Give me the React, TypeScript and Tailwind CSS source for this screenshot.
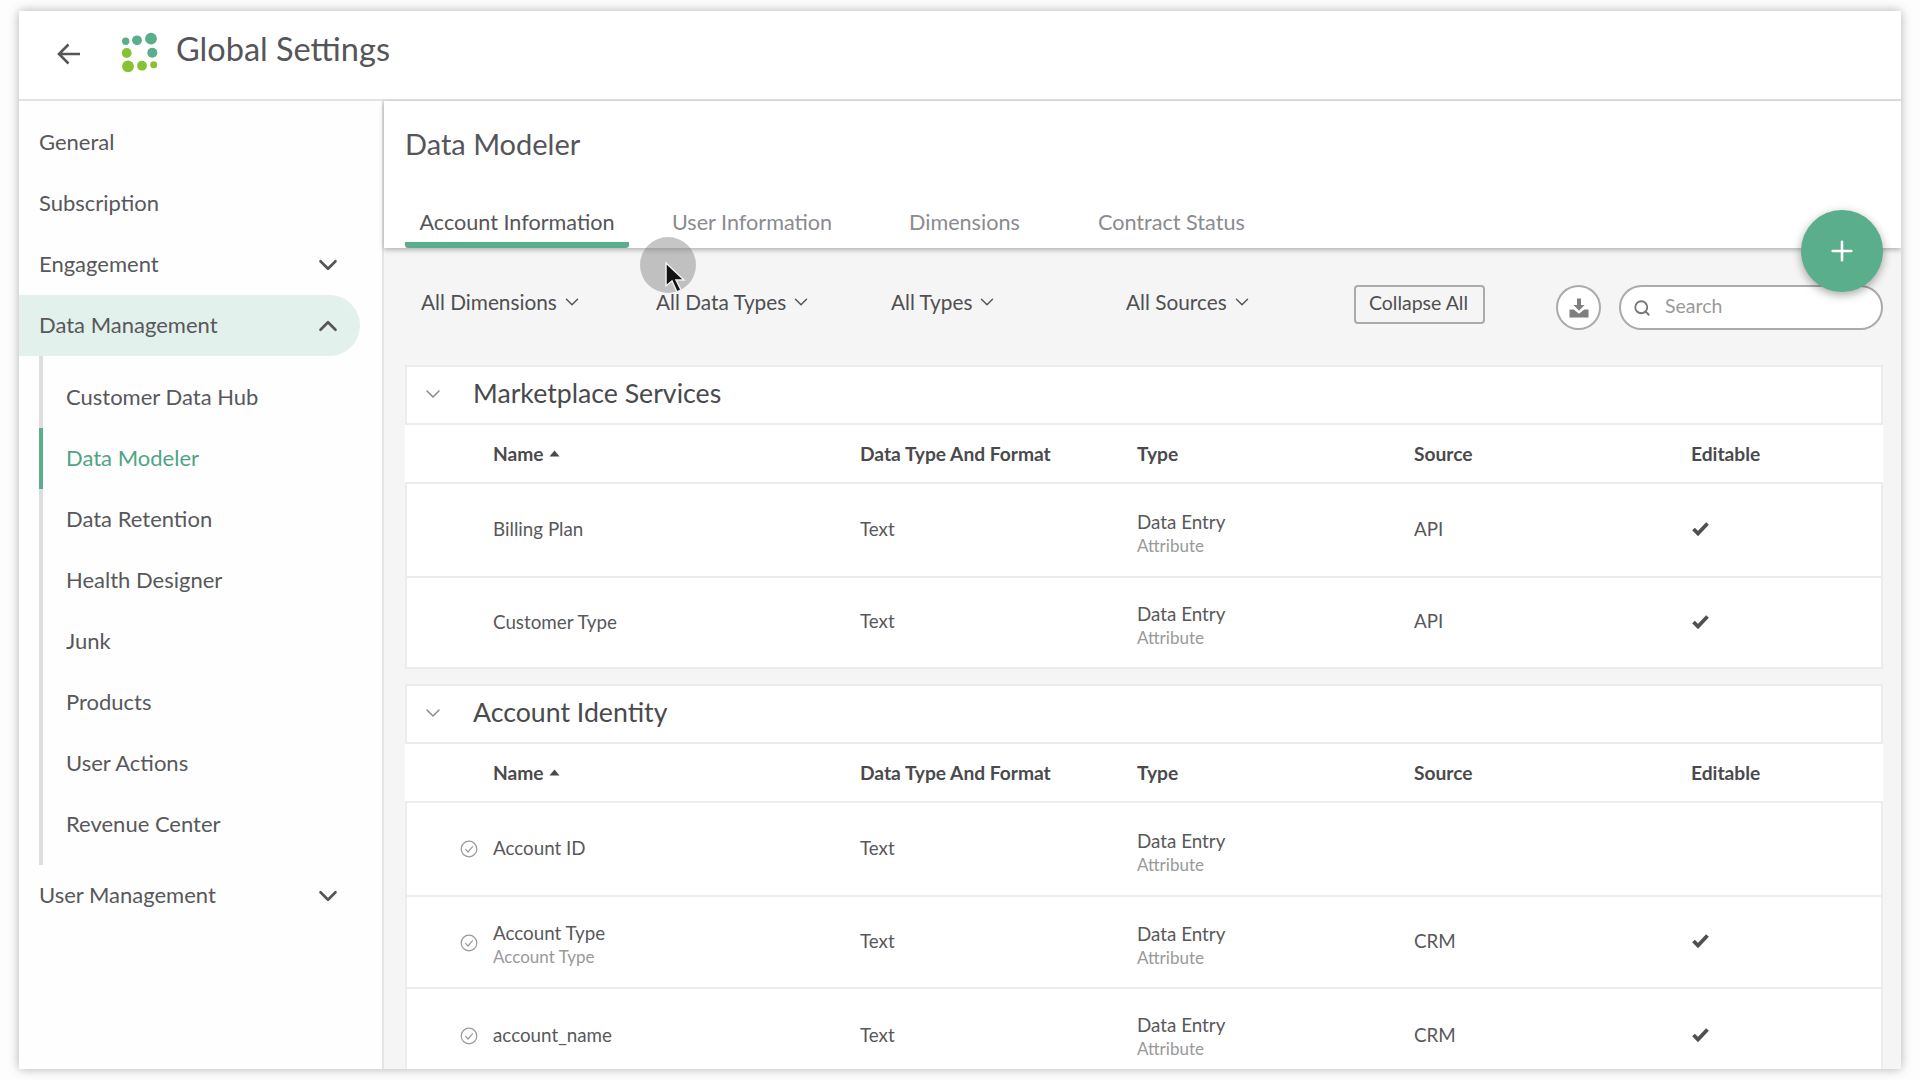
import React from "react";
import { ChevronDown, ChevronUp, Search, Plus } from "lucide-react";

const headGrid = "grid grid-cols-[88px_367px_277px_277px_277px_1fr]";
const rowGrid = "grid grid-cols-[86px_367px_277px_277px_277px_1fr]";

function Logo() {
  return (
    <svg viewBox="120 30 40 40" className="ml-[39px] -mt-[2px] w-[40px] h-[40px]">
      <circle cx="125.7" cy="39.3" r="3.7" fill="#5aae8b" />
      <circle cx="137" cy="38.3" r="4.9" fill="#5aae8b" />
      <circle cx="151" cy="36.7" r="5.9" fill="#5aae8b" />
      <circle cx="126.7" cy="51" r="4.9" fill="#86c232" />
      <circle cx="152.3" cy="50.7" r="5" fill="#5aae8b" />
      <circle cx="128" cy="64.3" r="5.9" fill="#86c232" />
      <circle cx="142" cy="63.7" r="4.9" fill="#86c232" />
      <circle cx="153.7" cy="62.7" r="3.5" fill="#86c232" />
    </svg>
  );
}

function Item({ label, chevron, active }: { label: string; chevron?: "up" | "down"; active?: boolean }) {
  return (
    <div
      className={
        "h-[61px] flex items-center justify-between pl-[20px] pr-[17px] w-[341px] " +
        (active ? "bg-[#e2f1ec] rounded-r-[31px]" : "")
      }
    >
      <span className="pb-[2px]">{label}</span>
      {chevron === "down" && <ChevronDown size={30} strokeWidth={2.1} className="text-[#555]" />}
      {chevron === "up" && <ChevronUp size={30} strokeWidth={2.1} className="text-[#555]" />}
    </div>
  );
}

function SubItem({ label, active }: { label: string; active?: boolean }) {
  return (
    <div
      className={
        "h-[61px] flex items-center pl-[23px] pb-[3px] border-l-[4px] -ml-[4px] " +
        (active ? "border-[#5aae8b] text-[#4fa583]" : "border-transparent")
      }
    >
      {label}
    </div>
  );
}

function Filter({ label, w }: { label: string; w: string }) {
  return (
    <div className={"h-[34px] flex items-center gap-[4px] text-[#4f4f52] " + w}>
      <span>{label}</span>
      <ChevronDown size={22} strokeWidth={1.6} className="text-[#555]" />
    </div>
  );
}

function CircleCheck() {
  return (
    <svg width="18" height="18" viewBox="0 0 18 18" fill="none" stroke="#9a9a9a" strokeWidth="1.2">
      <circle cx="9" cy="9" r="7.8" />
      <path d="M5.4 9.2l2.6 2.8 4.8-5.6" />
    </svg>
  );
}

function Tick() {
  return (
    <svg width="17" height="14" viewBox="0 0 17 14" fill="none" stroke="#505053" strokeWidth="3.8">
      <path d="M1.500 7l4.500 4.500L15.500 1.500" />
    </svg>
  );
}

type Row = {
  name: string;
  sub?: string;
  source?: string;
  editable?: boolean;
  check?: boolean;
  tight?: boolean;
  h: string;
};

function DataRow({ r }: { r: Row }) {
  return (
    <div className={rowGrid + " items-center border-x-2 border-b-2 border-[#ececec] bg-white " + r.h}>
      <div className={"flex justify-end pr-[15px] " + (r.sub ? "pt-[2px]" : "")}>{r.check && <CircleCheck />}</div>
      <div className={r.sub ? "pt-[5px]" : "pb-[2px]"}>
        <div className="leading-[24px]">{r.name}</div>
        {r.sub && <div className="leading-[24px] text-[17px] text-[#999]">{r.sub}</div>}
      </div>
      <div className="pb-[2px]">Text</div>
      <div className={r.tight ? "pt-[2px]" : "pt-[7px]"}>
        <div className="leading-[24px]">Data Entry</div>
        <div className="leading-[24px] text-[17px] text-[#999]">Attribute</div>
      </div>
      <div className="pb-[2px]">{r.source}</div>
      <div className="pb-[2px] pl-[1px] flex">{r.editable && <Tick />}</div>
    </div>
  );
}

function Section({ title, rows, last }: { title: string; rows: Row[]; last?: boolean }) {
  return (
    <div className={last ? "" : "mb-[15px]"}>
      <div className="h-[60px] flex items-center border-2 border-[#ececec] bg-white">
        <div className="w-[52px] flex justify-center">
          <ChevronDown size={24} strokeWidth={1.5} className="text-[#8a8a8a] -mt-[2px]" />
        </div>
        <span className="ml-[14px] text-[26.7px] text-[#4a4a4d] pb-[4px]">{title}</span>
      </div>
      <div className={headGrid + " h-[57px] pt-[1px] items-center bg-white font-bold text-[#4a4a4d] text-[19.2px]"}>
        <div />
        <div className="flex items-center gap-[5px]">
          Name
          <svg width="11" height="7" viewBox="0 0 11 7">
            <path d="M5.5 0.5L10.5 6.5H0.5z" fill="#4a4a4d" />
          </svg>
        </div>
        <div>Data Type And Format</div>
        <div>Type</div>
        <div>Source</div>
        <div>Editable</div>
      </div>
      <div className="border-t-2 border-[#ececec]">
        {rows.map((r) => (
          <DataRow key={r.name} r={r} />
        ))}
      </div>
    </div>
  );
}

export default function App() {
  return (
    <div
      className="w-[1920px] h-[1080px] bg-[#fdfdfd] pt-[11px] pl-[19px] overflow-hidden text-[#58585b]"
      style={{ fontFamily: '"Lato", "Liberation Sans", sans-serif' }}
    >
      <div className="relative w-[1882px] h-[1058px] bg-white shadow-[0_0_10px_rgba(0,0,0,0.3)] flex flex-col overflow-hidden">
        <header className="h-[90px] shrink-0 border-b-2 border-[#e2e2e2] flex items-center pb-[4px]">
          <svg width="24" height="22" viewBox="0 0 24 22" fill="none" stroke="#555" strokeWidth="2.6" className="ml-[38px] mt-[1px]">
            <path d="M23 11H2M11.5 1.5L2 11l9.5 9.5" />
          </svg>
          <Logo />
          <span className="ml-[16px] text-[32.5px] text-[#55555a] -mt-[7px]">Global Settings</span>
        </header>
        <div className="flex flex-1 min-h-0">
          <aside className="w-[365px] shrink-0 border-r-2 border-[#e4e4e4] pt-[11px] text-[22px] bg-[#fefefe]">
            <Item label="General" />
            <Item label="Subscription" />
            <Item label="Engagement" chevron="down" />
            <Item label="Data Management" chevron="up" active />
            <div className="ml-[20px] border-l-[4px] border-[#dedede] pt-[11px] pb-[10px]">
              <SubItem label="Customer Data Hub" />
              <SubItem label="Data Modeler" active />
              <SubItem label="Data Retention" />
              <SubItem label="Health Designer" />
              <SubItem label="Junk" />
              <SubItem label="Products" />
              <SubItem label="User Actions" />
              <SubItem label="Revenue Center" />
            </div>
            <Item label="User Management" chevron="down" />
          </aside>
          <main className="flex-1 min-w-0 bg-[#f5f5f5] relative">
            <div className="h-[147px] bg-white shadow-[0_2px_5px_rgba(0,0,0,0.28)] relative pt-[24px] pl-[21px] flex flex-col">
              <h1 className="text-[29px] text-[#55555a] leading-[38px]">Data Modeler</h1>
              <div className="flex mt-auto text-[21.6px] text-[#8b8b8f]">
                <div className="w-[224px] h-[50px] flex items-center justify-center text-[#55555a] border-b-[6px] border-[#5aae8b] rounded-b-[3px] pt-[5px]">
                  Account Information
                </div>
                <div className="ml-[43px] w-[237px] pb-[1px] flex items-center">User Information</div>
                <div className="w-[189px] flex items-center pb-[1px]">Dimensions</div>
                <div className="flex items-center pb-[1px]">Contract Status</div>
              </div>
            </div>
            <div className="h-[117px] flex items-start pt-[37px] pl-[37px] text-[20.8px]">
              <Filter label="All Dimensions" w="w-[235px]" />
              <Filter label="All Data Types" w="w-[235px]" />
              <Filter label="All Types" w="w-[235px]" />
              <Filter label="All Sources" w="w-[228px]" />
              <button className="w-[131px] h-[39px] border-2 border-[#ababab] rounded-[4px] text-[19.5px] text-[#4f4f52] pb-[4px] pr-[2px]">
                Collapse All
              </button>
              <div className="ml-[71px] w-[45px] h-[45px] rounded-full border-2 border-[#ababab] bg-white flex items-center justify-center">
                <svg width="20" height="20" viewBox="0 0 20 20" fill="#7f7f7f">
                  <path d="M8 0.5h4V7h3.5L10 12.8 4.500 7H8z" />
                  <path d="M0.500 11.500h4.200L10 15.800l5.300-4.300h4.200V19.500H0.500z" />
                </svg>
              </div>
              <div className="ml-[18px] w-[264px] h-[45px] rounded-full border-2 border-[#ababab] bg-white flex items-center pl-[12px] text-[#9a9a9a] text-[19.5px]">
                <Search size={18} strokeWidth={2.4} className="text-[#777]" />
                <span className="ml-[14px] pb-[3px]">Search</span>
              </div>
            </div>
            <div className="pl-[21px] pr-[18px] text-[18.8px]">
              <Section
                title="Marketplace Services"
                rows={[
                  { name: "Billing Plan", source: "API", editable: true, h: "h-[94px]" },
                  { name: "Customer Type", source: "API", editable: true, h: "h-[91px]" },
                ]}
              />
              <Section
                title="Account Identity"
                last
                rows={[
                  { name: "Account ID", check: true, h: "h-[94px]" },
                  { name: "Account Type", sub: "Account Type", source: "CRM", editable: true, check: true, h: "h-[92px]" },
                  { name: "account_name", source: "CRM", editable: true, check: true, tight: true, h: "h-[92px] pt-[4px]" },
                ]}
              />
            </div>
            <button className="absolute left-[1417px] top-[109px] w-[82px] h-[82px] rounded-full bg-[#5aae8b] text-white flex items-center justify-center shadow-[0_3px_10px_rgba(0,0,0,0.35)]">
              <Plus size={32} strokeWidth={1.9} />
            </button>
          </main>
        </div>
        <div className="absolute left-[621px] top-[226px] w-[56px] h-[56px] rounded-full bg-[rgba(120,120,120,0.42)]" />
        <svg width="24" height="34" viewBox="0 0 24 34" className="absolute left-[644px] top-[250px]">
          <path d="M3 2v23l6-5 5 11 4-2-5-10h8z" fill="#111" stroke="#eee" strokeWidth="1.5" />
        </svg>
      </div>
    </div>
  );
}
